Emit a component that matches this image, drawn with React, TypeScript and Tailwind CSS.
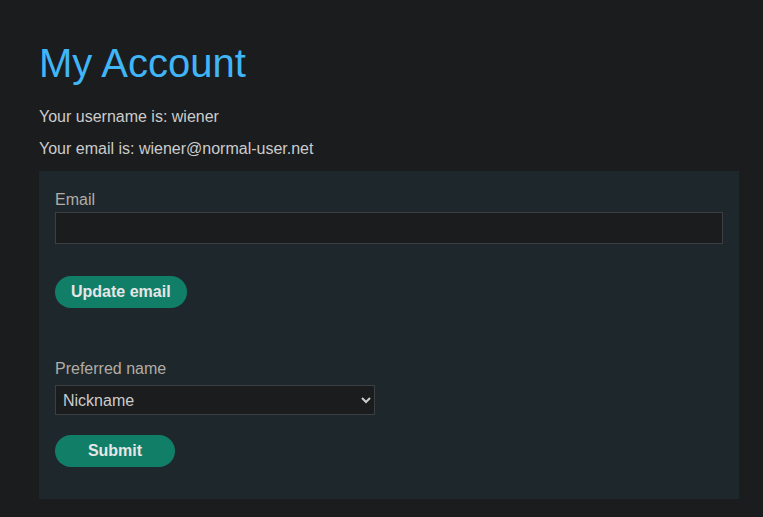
import React, { useState } from 'react';

const App: React.FC = () => {
  const [email, setEmail] = useState('');
  const [preferred, setPreferred] = useState('nickname');

  return (
    <div className="min-h-[517px] bg-[#1b1c1e] pl-[39px] pr-[24px] pt-[40px] pb-[18px] font-['Liberation_Sans',Arial,sans-serif] text-[16px]">
      <h1 className="text-[40px] leading-[46px] font-normal text-[#40b6f8]">My Account</h1>

      <div className="mt-[19px] flex flex-col gap-[8px] text-[#cccccc] leading-[24px]">
        <p>Your username is: wiener</p>
        <p>Your email is: wiener@normal-user.net</p>
      </div>

      {/* Update email form */}
      <div className="mt-[10px] bg-[#1e282c] px-[16px] pt-[17px] pb-[32px]">
        <form onSubmit={e => e.preventDefault()} className="flex flex-col items-start">
          <label htmlFor="email" className="block leading-[24px] text-[#b3aca5]">Email</label>
          <input
            id="email"
            name="email"
            type="email"
            value={email}
            onChange={e => setEmail(e.target.value)}
            className="w-full h-[32px] bg-[#1b1c1e] border border-[#3c4042] px-2 text-[#cccccc] outline-none"
          />
          <button
            type="submit"
            className="mt-[32px] h-[32px] px-4 rounded-full bg-[#117f68] font-bold leading-[32px] text-[#e6e6e6]"
          >
            Update email
          </button>
        </form>

        <form onSubmit={e => e.preventDefault()} className="mt-[49px] flex flex-col items-start">
          <label htmlFor="preferred" className="block leading-[24px] text-[#b3aca5]">Preferred name</label>
          <select
            id="preferred"
            name="preferred"
            value={preferred}
            onChange={e => setPreferred(e.target.value)}
            className="mt-[4px] w-[320px] h-[30px] bg-[#1b1c1e] border border-[#3c4042] pl-[3px] text-[#cccccc] [color-scheme:dark] outline-none"
          >
            <option value="nickname">Nickname</option>
            <option value="firstname">First name</option>
            <option value="lastname">Last name</option>
          </select>
          <button
            type="submit"
            className="mt-[20px] h-[32px] w-[120px] rounded-full bg-[#117f68] font-bold leading-[32px] text-[#e6e6e6]"
          >
            Submit
          </button>
        </form>
      </div>
    </div>
  );
};

export default App;
